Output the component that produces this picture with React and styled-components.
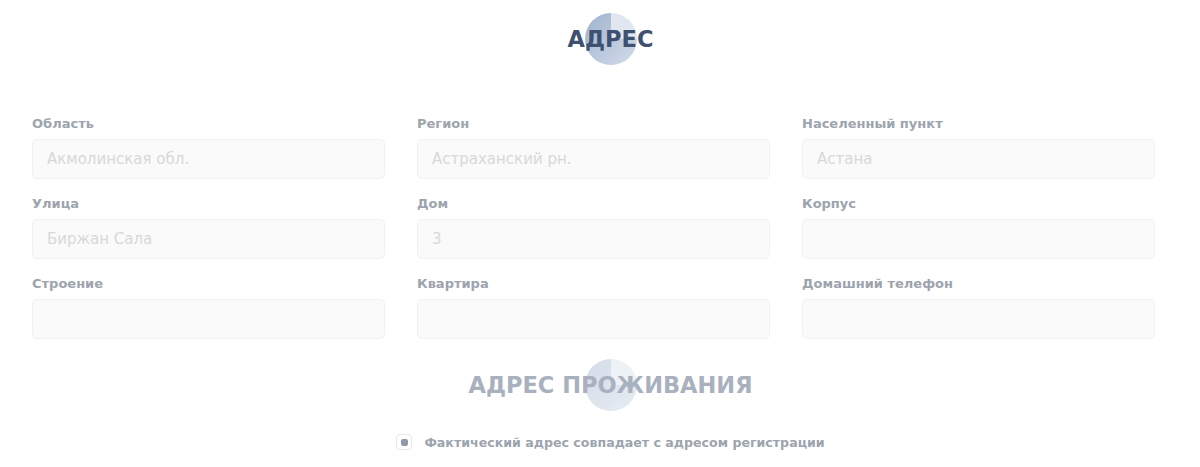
import React from 'react';
import styled, { createGlobalStyle } from 'styled-components';

const GlobalStyle = createGlobalStyle`
    html, body {
        margin: 0;
        padding: 0;
        background: #fff;
    }
    body {
        font-family: "DejaVu Sans", "Liberation Sans", sans-serif;
    }
`;

const fields = [
    { id: 'oblast', label: 'Область', placeholder: 'Акмолинская обл.' },
    { id: 'region', label: 'Регион', placeholder: 'Астраханский рн.' },
    { id: 'city', label: 'Населенный пункт', placeholder: 'Астана' },
    { id: 'street', label: 'Улица', placeholder: 'Биржан Сала' },
    { id: 'house', label: 'Дом', placeholder: '3' },
    { id: 'korpus', label: 'Корпус', placeholder: '' },
    { id: 'building', label: 'Строение', placeholder: '' },
    { id: 'flat', label: 'Квартира', placeholder: '' },
    { id: 'phone', label: 'Домашний телефон', placeholder: '' },
];

const Page = styled.div`
    width: 1123px;
    margin-left: 32px;
    padding-top: 13px;
`;

// heading with a small pie-like circle behind it
const TitleWrap = styled.div`
    position: relative;
    height: 52px;
    display: flex;
    align-items: center;
    justify-content: center;
    padding-left: 34px;
    margin-top: ${(p) => p.$top || 0}px;

    &::before {
        content: '';
        position: absolute;
        left: 50%;
        top: 0;
        width: 52px;
        height: 52px;
        margin-left: -9px;
        border-radius: 50%;
        background: ${(p) =>
            p.$muted
                ? 'conic-gradient(#eef1f6 0 25%, transparent 25% 100%), linear-gradient(135deg, #d2dbe8, #e8edf4)'
                : 'conic-gradient(#e0e7f1 0 25%, transparent 25% 100%), linear-gradient(135deg, #9fb2cd, #d3dce9)'};
    }
`;

const Title = styled.h2`
    position: relative;
    margin: 0;
    font-size: 22.5px;
    font-weight: 700;
    line-height: 28px;
    color: ${(p) => (p.$muted ? '#a9b1be' : '#3f5171')};
`;

const Grid = styled.div`
    display: grid;
    grid-template-columns: repeat(3, 1fr);
    gap: 17px 32px;
    margin-top: 51px;
`;

const Field = styled.div`
    display: flex;
    flex-direction: column;
`;

const Label = styled.label`
    font-size: 13px;
    font-weight: 700;
    line-height: 16px;
    color: #9ca4ae;
    margin-bottom: 7px;
`;

const Input = styled.input`
    box-sizing: border-box;
    height: 40px;
    width: 100%;
    padding: 0 14px;
    background: #fafafa;
    border: 1px solid #f1f1f1;
    border-radius: 5px;
    font-family: "DejaVu Sans", sans-serif;
    font-size: 15px;
    color: #555;
    outline: none;

    &::placeholder {
        color: #d8d8d8;
    }
`;

const CheckRow = styled.label`
    display: flex;
    align-items: center;
    justify-content: center;
    gap: 12px;
    margin-top: 23px;
    padding-left: 34px;
`;

const Box = styled.span`
    box-sizing: border-box;
    width: 16px;
    height: 16px;
    border: 1px solid #e6e8ec;
    border-radius: 4px;
    background: #fff;
    display: flex;
    align-items: center;
    justify-content: center;

    &::after {
        content: '';
        width: 7px;
        height: 7px;
        border-radius: 2px;
        background: #8e99aa;
    }
`;

const CheckText = styled.span`
    font-size: 12.6px;
    font-weight: 700;
    color: #9ca4ae;
`;

const App = () => {
    return (
        <>
            <GlobalStyle />
            <Page>
                <TitleWrap>
                    <Title>АДРЕС</Title>
                </TitleWrap>

                <Grid>
                    {fields.map((f) => (
                        <Field key={f.id}>
                            <Label htmlFor={f.id}>{f.label}</Label>
                            <Input id={f.id} placeholder={f.placeholder} />
                        </Field>
                    ))}
                </Grid>

                <TitleWrap $top={20} $muted>
                    <Title $muted>АДРЕС ПРОЖИВАНИЯ</Title>
                </TitleWrap>

                <CheckRow>
                    <Box />
                    <CheckText>Фактический адрес совпадает с адресом регистрации</CheckText>
                </CheckRow>
            </Page>
        </>
    );
};

export default App;
